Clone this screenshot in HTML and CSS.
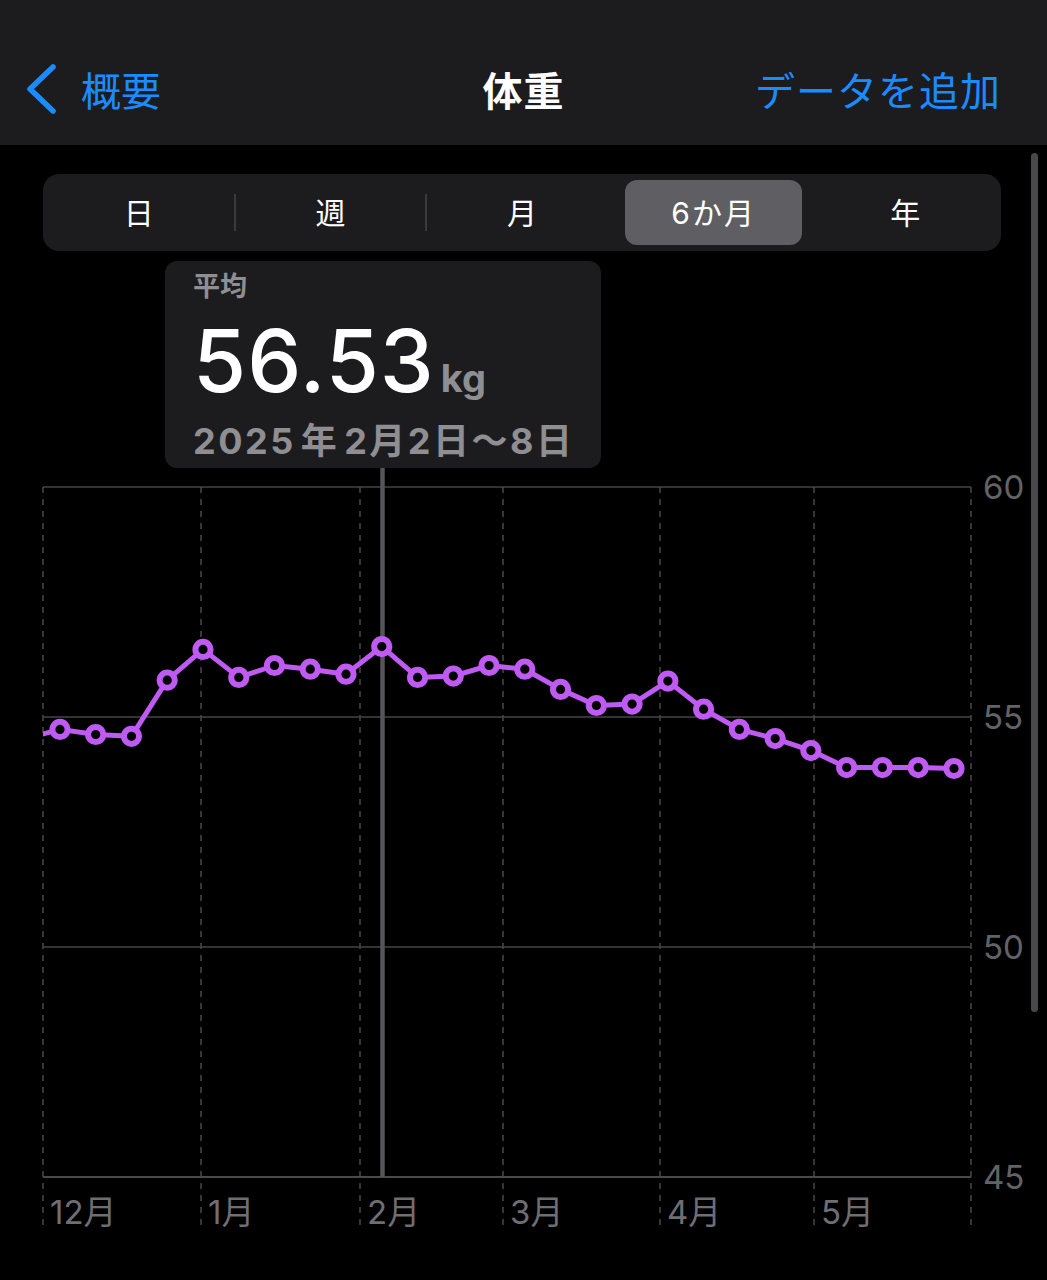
FILE: index.html
```html
<!DOCTYPE html>
<html lang="ja">
<head>
  <meta charset="UTF-8" />
  <meta name="viewport" content="width=device-width, initial-scale=1" />
  <title>体重</title>
  <link rel="stylesheet" href="styles.css">
</head>
<body>
  <header class="nav">
    <a class="back" href="#">
      <svg class="chev" width="34" height="52" viewBox="0 0 34 52"><path d="M29 4 L6 26 L29 48" fill="none" stroke="currentColor" stroke-width="5.5" stroke-linecap="round" stroke-linejoin="round"/></svg>
      <span>概要</span>
    </a>
    <h1 class="title">体重</h1>
    <a class="add" href="#">データを追加</a>
  </header>

  <main class="content">
    <div class="segments">
      <div class="seg">日</div>
      <div class="seg sep">週</div>
      <div class="seg sep">月</div>
      <div class="seg active">6か月</div>
      <div class="seg">年</div>
    </div>

    <div class="tip">
      <div class="tip-label">平均</div>
      <div class="tip-value">56.53<span class="unit">kg</span></div>
      <div class="tip-date">2025 年 2月2日〜8日</div>
    </div>

    <svg class="chart" id="chart" width="1047" height="812" viewBox="0 468 1047 812"></svg>
  </main>

  <div class="scrollbar"></div>

  <script>
    // 週ごとの平均体重 (kg)
    const weights = [54.52, 54.73, 54.62, 54.58, 55.80, 56.47, 55.86, 56.12, 56.04, 55.93,
      56.53, 55.86, 55.89, 56.12, 56.04, 55.60, 55.25, 55.28, 55.78, 55.17,
      54.73, 54.53, 54.27, 53.90, 53.90, 53.90, 53.88];

    const plot = { left: 43, right: 971, top: 487, bottom: 1177 };
    const yOf = v => plot.top + (60 - v) * (plot.bottom - plot.top) / 15;
    const xOf = i => 24.2 + i * 35.76;
    const months = [['12月', 43], ['1月', 201], ['2月', 360], ['3月', 503], ['4月', 660], ['5月', 814]];

    let s = '';
    s += '<defs><clipPath id="plot"><rect x="' + plot.left + '" y="400" width="' + (plot.right - plot.left + 20) + '" height="800"/></clipPath></defs>';

    // 横のグリッド線と目盛り
    [60, 55, 50, 45].forEach(v => {
      const y = yOf(v);
      s += '<line class="' + (v === 45 ? 'axis' : 'hgrid') + '" x1="' + plot.left + '" x2="' + plot.right + '" y1="' + y + '" y2="' + y + '"/>';
      s += '<text class="ylab" x="983" y="' + (y + 12) + '">' + v + '</text>';
    });

    // 縦の点線と月ラベル
    months.forEach(([m, x]) => {
      s += '<line class="vgrid" x1="' + x + '" x2="' + x + '" y1="' + plot.top + '" y2="1230"/>';
      s += '<text class="xlab" x="' + (x + 7) + '" y="1224">' + m + '</text>';
    });
    s += '<line class="vgrid" x1="' + plot.right + '" x2="' + plot.right + '" y1="' + plot.top + '" y2="1230"/>';

    // 選択中の週
    s += '<line class="cursor" x1="382.5" x2="382.5" y1="468" y2="' + plot.bottom + '"/>';

    const pts = weights.map((v, i) => xOf(i).toFixed(1) + ',' + yOf(v).toFixed(1)).join(' ');
    s += '<g clip-path="url(#plot)"><polyline class="line" points="' + pts + '"/>';
    weights.forEach((v, i) => {
      if (i === 0) return;
      s += '<circle class="dot" cx="' + xOf(i).toFixed(1) + '" cy="' + yOf(v).toFixed(1) + '" r="7.6"/>';
    });
    s += '</g>';

    document.getElementById('chart').innerHTML = s;
  </script>
</body>
</html>
```

FILE: styles.css
```css
body {
  margin: 0;
  width: 1047px;
  height: 1280px;
  overflow: hidden;
  position: relative;
  background: #000;
  color: #fff;
  font-family: Inter, "Noto Sans CJK JP", sans-serif;
}
a { text-decoration: none; }

.nav {
  height: 145px;
  box-sizing: border-box;
  padding: 32px 46px 0 46px;
  background: #1c1c1e;
  display: grid;
  grid-template-columns: 1fr auto 1fr;
  align-items: center;
}
.back {
  display: flex;
  align-items: center;
  gap: 23px;
  margin-left: -22px;
  color: #1a8cff;
  font-size: 40px;
}
.chev { display: block; }
.title {
  margin: 0;
  font-size: 40px;
  font-weight: 700;
  letter-spacing: 1px;
}
.add {
  justify-self: end;
  color: #1a8cff;
  font-size: 40px;
  letter-spacing: 1px;
}

.content {
  padding-top: 29px;
}
.segments {
  margin: 0 46px 0 43px;
  height: 77px;
  box-sizing: border-box;
  padding: 6px 0;
  background: #1c1c1e;
  border-radius: 16px;
  display: grid;
  grid-template-columns: repeat(5, 1fr);
}
.seg {
  position: relative;
  display: flex;
  align-items: center;
  justify-content: center;
  padding-bottom: 3px;
  font-size: 30px;
}
.seg.sep::before {
  content: "";
  position: absolute;
  left: -1px;
  top: 14px;
  bottom: 14px;
  width: 2px;
  background: #3a3a3c;
}
.seg.active {
  margin: 0 7px;
  background: #5f5f63;
  border-radius: 12px;
  letter-spacing: 2px;
}

.tip {
  margin: 10px 0 0 165px;
  width: 436px;
  height: 207px;
  box-sizing: border-box;
  padding: 10px 16px 0 28px;
  background: #1c1c1e;
  border-radius: 12px;
}
.tip-label {
  font-size: 27px;
  line-height: 32px;
  font-weight: 700;
  color: #8e8e93;
}
.tip-value {
  margin-top: 8px;
  font-size: 86px;
  line-height: 100px;
  font-weight: 500;
  letter-spacing: 1px;
}
.unit {
  margin-left: 6px;
  font-size: 38px;
  font-weight: 700;
  color: #8e8e93;
  letter-spacing: 0;
}
.tip-date {
  margin-top: -9px;
  font-size: 36px;
  line-height: 44px;
  font-weight: 700;
  color: #8e8e93;
  letter-spacing: 2.5px;
  word-spacing: -6px;
  white-space: nowrap;
}

.chart { display: block; }
.hgrid { stroke: #333336; stroke-width: 2; }
.axis { stroke: #4a4a4c; stroke-width: 2; }
.vgrid { stroke: #48484a; stroke-width: 1.5; stroke-dasharray: 6 6; }
.cursor { stroke: #555558; stroke-width: 4.5; }
.ylab {
  font-size: 33px;
  fill: #636366;
}
.xlab {
  font-size: 33px;
  fill: #6e6e73;
}
.line {
  fill: none;
  stroke: #bf5af2;
  stroke-width: 5;
  stroke-linejoin: round;
}
.dot {
  fill: #000;
  stroke: #bf5af2;
  stroke-width: 6;
}

.scrollbar {
  position: absolute;
  right: 9px;
  top: 153px;
  width: 7px;
  height: 859px;
  background: #48484a;
  border-radius: 4px;
}
```
